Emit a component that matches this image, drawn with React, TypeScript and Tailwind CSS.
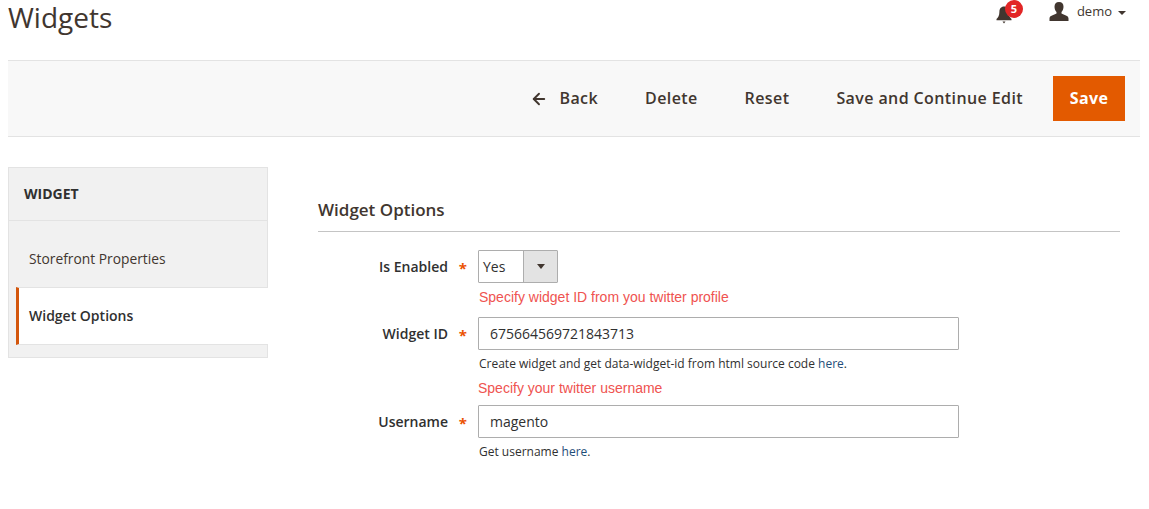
import React from 'react';
import { ArrowLeft } from 'lucide-react';

const sans = 'font-["Open_Sans",sans-serif]';

const Label = ({ text }: { text: string }) => (
  <div className="w-[160px] flex items-center justify-end h-[33px] text-[14px] font-semibold text-[#303030]">
    <span>{text}</span>
    <span className="w-[30px] text-right pr-[11px] text-[#eb5202] text-[15px] font-bold leading-none pt-[3px]">*</span>
  </div>
);

const Err = ({ text, className }: { text: string; className: string }) => (
  <div className={`font-["Liberation_Sans",sans-serif] text-[14px] leading-[16px] text-[#ef5350] ${className}`}>{text}</div>
);

const TextField = ({ value }: { value: string }) => (
  <div className="w-[481px] h-[33px] border border-[#adadad] rounded-[1px] pl-[11px] flex items-center text-[14px] text-[#303030] bg-white">
    {value}
  </div>
);

const Note = ({ text }: { text: string }) => (
  <div className="text-[12px] leading-[16px] text-[#303030] mt-[6px] ml-[1px]">
    {text} <span className="text-[#1f4e79]">here</span>.
  </div>
);

const App: React.FC = () => {
  return (
    <div className={`${sans} w-[1149px] h-[509px] overflow-hidden bg-white text-[#303030]`}>
      {/* header */}
      <div className="h-[60px] flex justify-between pl-[8px] pr-[23px]">
        <h1 className="text-[28px] leading-[34px] font-normal text-[#41362f]">Widgets</h1>
        <div className="flex h-[24px] items-center text-[13px] text-[#41362f]">
          <div className="relative w-[18px] h-[18px] mr-[36px] mt-[4px]">
            <svg viewBox="0 0 18 20" className="w-[18px] h-[20px]" fill="#41362f">
              <path d="M9 1.5c-3 0-4.6 2.300-4.600 5.300 0 4-1.200 5.500-2.900 7.200v1.300h15v-1.300c-1.700-1.700-2.900-3.200-2.900-7.200C13.600 3.800 12 1.500 9 1.500z" />
              <path d="M7.500 16.600h3L9 18.600z" />
            </svg>
            <span className="absolute -top-[5px] left-[10px] w-[18px] h-[18px] rounded-full bg-[#e22626] text-white text-[11px] font-bold flex items-center justify-center">5</span>
          </div>
          <svg viewBox="0 0 20 20" className="w-[20px] h-[20px] mr-[8px]" fill="#41362f">
            <path d="M10 0c-3 0-4.500 2-4.500 4.800 0 2 .8 4 2 5.200v1.600C5 13 .5 13.600.5 16.500V19h19v-2.500c0-2.900-4.500-3.500-7-4.900V10c1.200-1.200 2-3.200 2-5.200C14.500 2 13 0 10 0z" />
          </svg>
          <span>demo</span>
          <span className="ml-[6px] mt-[1px] w-0 h-0 border-x-[4px] border-x-transparent border-t-[4px] border-t-[#41362f]" />
        </div>
      </div>

      {/* toolbar */}
      <div className="ml-[8px] w-[1132px] h-[77px] bg-[#f8f8f8] border-y border-[#e3e3e3] flex items-center justify-end pr-[15px] text-[16px] font-semibold text-[#41362f] tracking-[0.4px]">
        <ArrowLeft size={18} strokeWidth={2.5} className="mr-[11px]" />
        <span className="mr-[47px] -mt-[2px]">Back</span>
        <span className="mr-[47px] -mt-[2px]">Delete</span>
        <span className="mr-[47px] -mt-[2px]">Reset</span>
        <span className="mr-[30px] -mt-[2px]">Save and Continue Edit</span>
        <div className="w-[72px] h-[45px] bg-[#e35a00] text-white font-bold flex items-center justify-center pb-[1px]">Save</div>
      </div>

      <div className="flex pl-[8px] pt-[30px]">
        {/* sidebar */}
        <div className="w-[260px] h-[191px] bg-[#f1f1f1] border border-[#e3e3e3] flex flex-col">
          <div className="h-[53px] pl-[15px] pb-[2px] flex items-center text-[14px] font-bold text-[#303030] border-b border-[#e3e3e3]">WIDGET</div>
          <div className="h-[66px] pl-[20px] pt-[11px] flex items-center text-[13.8px] text-[#41362f]">Storefront Properties</div>
          <div className="ml-[7px] -mr-[1px] h-[58px] bg-white border-l-[3px] border-l-[#d3560c] border-y border-y-[#e3e3e3] pl-[10px] pb-[2px] flex items-center text-[14px] font-semibold text-[#303030]">
            Widget Options
          </div>
        </div>

        {/* form */}
        <div className="ml-[50px] w-[802px]">
          <div className="h-[65px] border-b border-[#c4c4c4] flex items-end pb-[10px] text-[17px] leading-[22px] font-semibold text-[#41362f]">Widget Options</div>
          <div className="pt-[18px] flex">
            <Label text="Is Enabled" />
            <div className="w-[80px] h-[33px] border border-[#adadad] rounded-[1px] flex text-[14px] text-[#303030]">
              <div className="w-[45px] pl-[4px] flex items-center bg-white border-r border-[#adadad]">Yes</div>
              <div className="flex-1 bg-[#e3e3e3] flex items-center justify-center">
                <span className="w-0 h-0 border-x-[4px] border-x-transparent border-t-[5px] border-t-[#41362f]" />
              </div>
            </div>
          </div>
          <Err text="Specify widget ID from you twitter profile" className="ml-[161px] mt-[6px]" />
          <div className="flex mt-[12px]">
            <Label text="Widget ID" />
            <div>
              <TextField value="675664569721843713" />
              <Note text="Create widget and get data-widget-id from html source code" />
              <Err text="Specify your twitter username" className="mt-[8px]" />
            </div>
          </div>
          <div className="flex mt-[9px]">
            <Label text="Username" />
            <div>
              <TextField value="magento" />
              <Note text="Get username" />
            </div>
          </div>
        </div>
      </div>
    </div>
  );
};

export default App;
